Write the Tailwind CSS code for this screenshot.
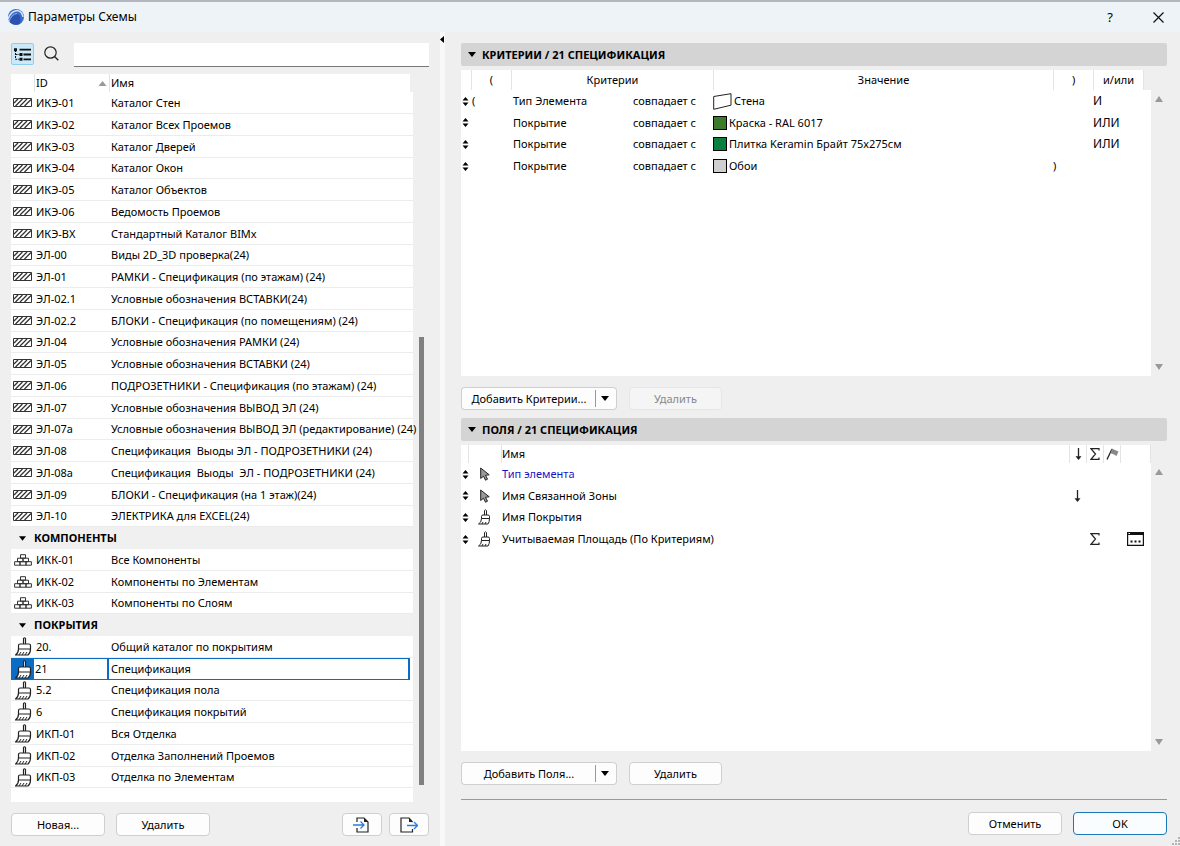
<!DOCTYPE html>
<html lang="ru">

<head>
    <meta charset="UTF-8">
    <meta name="viewport" content="width=device-width, initial-scale=1.0">
    <title>Параметры Схемы</title>
    <script src="https://cdn.jsdelivr.net/npm/@tailwindcss/browser@4"></script>
</head>

<body class="bg-[#efefef] font-['Noto_Sans','Open_Sans',sans-serif] text-[11px] leading-4 text-black">
    <!-- icons -->
    <svg class="hidden">
        <symbol id="wall" viewBox="0 0 19 9">
            <path d="M.5.5h18v8H.5z" fill="#fff" stroke="#333" />
            <path d="M1 5l4-4M2.500 8l7-7M7 8l7-7M11.500 8l6.500-6.500" stroke="#333" stroke-width="1.300" />
        </symbol>
        <symbol id="bricks" viewBox="0 0 18 12">
            <path d="M6.500.7h5v3.500h-5zM3.500 4.200h5.500v3.500H3.500zM9 4.200h5.500v3.500H9zM.6 7.700H6v3.500H.6zM6 7.700h6v3.500H6zM12 7.700h5.400v3.500H12z" fill="none" stroke="#333" />
        </symbol>
        <symbol id="brush" viewBox="0 0 17 19">
            <path d="M8.500 7V1.500q1-1.500 2 0V7M3.500 12V8.500Q3.500 7 5 7h9q1.500 0 1.500 1.500V12zM3.500 12q0 4-3 6h12.500q2.500-2 2.500-6" fill="#fff" stroke="#222" stroke-width="1.200" />
            <path d="M4 18l2-3M7 18l2-3M10 18l2-3" stroke="#222" />
        </symbol>
        <symbol id="brush-small" viewBox="0 0 13 16">
            <path d="M6.500 6V1.500q1-1.500 2 0V6M3.500 9.500V7.500Q3.500 6 5 6h5q1.500 0 1.500 1.500v2zM3.500 9.500q0 4-3 5.500H10q1.500-2 1.500-5.500M4 15l1-2M7 15l1-2" fill="none" stroke="#222" />
        </symbol>
        <symbol id="cursor" viewBox="0 0 10 14">
            <path d="M.7 1v10.500l2.800-2.300 2 4 2-1-2-3.900 3.700-.5z" fill="#999" stroke="#222" />
        </symbol>
        <symbol id="drag" viewBox="0 0 7 9">
            <path d="M3.500 0L6.500 3.500h-6zM3.500 9l3-3.500h-6z" />
        </symbol>
        <symbol id="down" viewBox="0 0 8 5">
            <path d="M0 0h8L4 5z" />
        </symbol>
        <symbol id="arrow" viewBox="0 0 7 12">
            <path d="M3.500 0v9.500" fill="none" stroke="#222" stroke-width="1.300" />
            <path d="M.5 8.200h6L3.500 12z" fill="#222" />
        </symbol>
        <symbol id="sigma" viewBox="0 0 10 12">
            <path d="M9 2.500V.7H1L5.500 6 1 11.300h8V9.500" fill="none" stroke="#222" stroke-width="1.200" />
        </symbol>
    </svg>

    <div class="flex h-screen flex-col border-t-2 border-[#b4b7bd]">
        <header class="flex h-[30px] shrink-0 items-center bg-[#eef3f8] pr-[16px] pl-[8px]">
            <svg class="size-[16px]" viewBox="0 0 16 16">
                <circle cx="8" cy="8" r="8" fill="#3d6cc8" />
                <path d="M0 10Q3 2 9 1.500q5 .5 6 6.500" fill="none" stroke="#d5e4f8" stroke-width="1.500" />
                <path d="M1.500 13Q4 5 9 5q3.500 1 3.500 6l-1 4q-6 2-10-2" fill="#2c52b0" />
                <path d="M1 12.500Q3.500 5 9 4.500" fill="none" stroke="#8fb4ec" />
            </svg>
            <h1 class="ml-[4px] grow text-[12px]">Параметры Схемы</h1>
            <button class="mr-[40px] text-[13px]" aria-label="Справка">?</button>
            <button aria-label="Закрыть">
                <svg class="size-[11px]" viewBox="0 0 11 11"><path d="M.5.5l10 10M10.500.5l-10 10" stroke="#111" stroke-width="1.200" /></svg>
            </button>
        </header>

        <main class="flex min-h-0 grow">
            <!-- scheme list -->
            <section class="flex w-[440px] shrink-0 flex-col px-[11px] pt-[11px] pb-[10px]">
                <div class="flex h-[24px] shrink-0 items-start">
                    <button class="flex h-[22px] w-[23px] items-center justify-center rounded-xs border border-[#8ccdf0] bg-[#cbe9f8]" aria-label="Дерево">
                        <svg class="h-[13px] w-[17px]" viewBox="0 0 17 13">
                            <path d="M5.500 1.700H17M9.500 6.500H17M9.500 11.300H17" stroke="#111" stroke-width="1.800" />
                            <path d="M1.500 2v9.300h4M1.500 6.500h4" fill="none" stroke="#111" stroke-dasharray="2 1" />
                            <path d="M0 .2h3v3H0zM5.500 5h3v3h-3zM5.500 9.800h3v3h-3z" fill="#111" />
                        </svg>
                    </button>
                    <button class="ml-[10px] pt-[3px]" aria-label="Поиск">
                        <svg class="size-[15px]" viewBox="0 0 15 15"><circle cx="6.500" cy="6.500" r="5.700" fill="none" stroke="#222" stroke-width="1.200" /><path d="M10.500 10.500L14.300 14.300" stroke="#222" stroke-width="1.300" /></svg>
                    </button>
                    <input type="text" aria-label="Поиск схемы" class="ml-[15px] h-[24px] min-w-0 grow border-b border-[#777] bg-white px-1 outline-none">
                </div>

                <div class="mt-[7px] flex min-h-0 grow">
                    <div class="w-[402px] overflow-x-visible overflow-y-clip bg-white">
                        <table class="w-full table-fixed border-separate border-spacing-0 text-left">
                            <colgroup>
                                <col class="w-[23px]">
                                <col class="w-[75px]">
                                <col>
                                <col class="w-[3px]">
                            </colgroup>
                            <thead>
                                <tr class="h-[18px]">
                                    <th class="p-0"></th>
                                    <th class="border-l border-[#e4e4e4] p-0 font-normal">
                                        <div class="flex items-center justify-between pr-[2px] pl-[1px]">ID
                                            <svg class="h-[5px] w-[9px] rotate-180 fill-[#999]"><use href="#down" /></svg>
                                        </div>
                                    </th>
                                    <th class="border-l border-[#e4e4e4] p-0 pl-[1px] font-normal">Имя</th>
                                    <th class="bg-[#efefef] p-0"></th>
                                </tr>
                            </thead>
                            <tbody id="schemes"></tbody>
                        </table>
                    </div>
                    <div class="ml-[6px] flex w-[5px] flex-col justify-end pb-[17px]">
                        <div class="h-[63%] bg-[#808080]"></div>
                    </div>
                </div>

                <div class="mt-[11px] flex h-[23px] shrink-0">
                    <button class="w-[94px] rounded-sm border border-[#cfcfcf] bg-[#fdfdfd]">Новая...</button>
                    <button class="ml-[11px] w-[94px] rounded-sm border border-[#cfcfcf] bg-[#fdfdfd]">Удалить</button>
                    <button class="ml-auto flex w-[40px] items-center justify-center rounded-sm border border-[#cfcfcf] bg-[#fdfdfd]" aria-label="Импорт">
                        <svg class="h-[16px] w-[18px]" viewBox="0 0 18 16" fill="none"><path d="M4 5V1h7L15 5v10H4v-4" stroke="#222" stroke-width="1.200" /><path d="M11 1v4h4z" fill="#222" /><path d="M0 8h10.500M7.500 4.500L11 8l-3.500 3.500" stroke="#2b7be0" stroke-width="1.300" /></svg>
                    </button>
                    <button class="ml-[7px] flex w-[40px] items-center justify-center rounded-sm border border-[#cfcfcf] bg-[#fdfdfd]" aria-label="Экспорт">
                        <svg class="h-[16px] w-[18px]" viewBox="0 0 18 16" fill="none"><path d="M12.500 12v3H1V1h8l3.500 4" stroke="#222" stroke-width="1.200" /><path d="M9 1v4h3.500z" fill="#222" /><path d="M7 8.500h10M14 5l3.500 3.500L14 12" stroke="#2b7be0" stroke-width="1.300" /></svg>
                    </button>
                </div>
            </section>

            <div class="w-[5px] shrink-0 bg-[#f8f8f8] pt-[4px]">
                <svg class="h-[7px] w-[4px]" viewBox="0 0 4 7"><path d="M4 0v7L0 3.500z" /></svg>
            </div>

            <section class="flex min-w-0 grow flex-col pt-[11px] pr-[13px] pb-[11px] pl-[16px]">
                <!-- criteria -->
                <h2 class="flex h-[23px] shrink-0 items-center rounded-xs bg-[#d4d4d4] pl-[7px] text-[11px] font-bold">
                    <svg class="mr-[6px] h-[5px] w-[8px]"><use href="#down" /></svg>КРИТЕРИИ / 21 СПЕЦИФИКАЦИЯ
                </h2>
                <div class="mt-[4px] flex min-h-0 flex-1">
                    <div class="grow overflow-hidden bg-white">
                        <table class="w-full table-fixed border-separate border-spacing-0">
                            <colgroup>
                                <col class="w-[10px]">
                                <col class="w-[40px]">
                                <col class="w-[122px]">
                                <col class="w-[80px]">
                                <col>
                                <col class="w-[40px]">
                                <col class="w-[50px]">
                                <col class="w-[8px]">
                            </colgroup>
                            <thead>
                                <tr class="h-[20px]">
                                    <th></th>
                                    <th class="border-l border-[#e4e4e4] font-normal">(</th>
                                    <th colspan="2" class="border-l border-[#e4e4e4] font-normal">Критерии</th>
                                    <th class="border-l border-[#e4e4e4] font-normal">Значение</th>
                                    <th class="border-l border-[#e4e4e4] font-normal">)</th>
                                    <th class="border-l border-[#e4e4e4] font-normal">и/или</th>
                                    <th class="border-l border-[#e4e4e4] bg-[#efefef]"></th>
                                </tr>
                            </thead>
                            <tbody>
                                <tr class="h-[22px]">
                                    <td class="pl-px"><svg class="h-[9px] w-[7px]"><use href="#drag" /></svg></td>
                                    <td class="pl-px">(</td>
                                    <td class="pl-[2px]">Тип Элемента</td>
                                    <td>совпадает с</td>
                                    <td>
                                        <div class="flex items-center gap-[2px]">
                                            <svg class="h-[17px] w-[19px]" viewBox="0 0 19 17"><path d="M.7 3.500L18 .7v11.500L.7 16.300z" fill="#fff" stroke="#222" /></svg>Стена
                                        </div>
                                    </td>
                                    <td></td>
                                    <td class="text-[12px]">И</td>
                                    <td></td>
                                </tr>
                                <tr class="h-[21px]">
                                    <td class="pl-px"><svg class="h-[9px] w-[7px]"><use href="#drag" /></svg></td>
                                    <td></td>
                                    <td class="pl-[2px]">Покрытие</td>
                                    <td>совпадает с</td>
                                    <td>
                                        <div class="flex items-center gap-[2px]"><span class="size-[14px] border border-black bg-[#3c7a2c]"></span>Краска - RAL 6017</div>
                                    </td>
                                    <td></td>
                                    <td class="text-[12px]">ИЛИ</td>
                                    <td></td>
                                </tr>
                                <tr class="h-[22px]">
                                    <td class="pl-px"><svg class="h-[9px] w-[7px]"><use href="#drag" /></svg></td>
                                    <td></td>
                                    <td class="pl-[2px]">Покрытие</td>
                                    <td>совпадает с</td>
                                    <td>
                                        <div class="flex items-center gap-[2px]"><span class="size-[14px] border border-black bg-[#0a8040]"></span>Плитка Keramin Брайт 75х275см</div>
                                    </td>
                                    <td></td>
                                    <td class="text-[12px]">ИЛИ</td>
                                    <td></td>
                                </tr>
                                <tr class="h-[22px]">
                                    <td class="pl-px"><svg class="h-[9px] w-[7px]"><use href="#drag" /></svg></td>
                                    <td></td>
                                    <td class="pl-[2px]">Покрытие</td>
                                    <td>совпадает с</td>
                                    <td>
                                        <div class="flex items-center gap-[2px]"><span class="size-[14px] border border-black bg-[#cfcfcf]"></span>Обои</div>
                                    </td>
                                    <td>)</td>
                                    <td></td>
                                    <td></td>
                                </tr>
                            </tbody>
                        </table>
                    </div>
                    <div class="flex w-[16px] shrink-0 flex-col items-center justify-between pt-[26px] pb-[6px]">
                        <svg class="h-[6px] w-[8px] rotate-180 fill-[#999]" viewBox="0 0 8 6"><path d="M0 0h8L4 6z" /></svg>
                        <svg class="h-[6px] w-[8px] fill-[#999]" viewBox="0 0 8 6"><path d="M0 0h8L4 6z" /></svg>
                    </div>
                </div>
                <div class="mt-[11px] flex h-[23px] shrink-0">
                    <button class="w-[135px] rounded-l-sm border border-r-0 border-[#cfcfcf] bg-[#fdfdfd]">Добавить Критерии...</button>
                    <button class="flex w-[21px] items-center rounded-r-sm border border-l-0 border-[#cfcfcf] bg-[#fdfdfd]" aria-label="Варианты критериев">
                        <span class="mr-[5px] -ml-px h-[17px] w-px bg-[#999]"></span><svg class="h-[5px] w-[8px]"><use href="#down" /></svg>
                    </button>
                    <button disabled class="ml-[12px] w-[93px] rounded-sm border border-[#e6e6e6] bg-[#f5f5f5] text-[#888]">Удалить</button>
                </div>

                <!-- fields -->
                <h2 class="mt-[8px] flex h-[23px] shrink-0 items-center rounded-xs bg-[#d4d4d4] pl-[7px] text-[11px] font-bold">
                    <svg class="mr-[6px] h-[5px] w-[8px]"><use href="#down" /></svg>ПОЛЯ / 21 СПЕЦИФИКАЦИЯ
                </h2>
                <div class="mt-[4px] flex min-h-0 flex-1">
                    <div class="grow overflow-hidden bg-white">
                        <table class="w-full table-fixed border-separate border-spacing-0 text-left">
                            <colgroup>
                                <col class="w-[7px]">
                                <col class="w-[33px]">
                                <col>
                                <col class="w-[17px]">
                                <col class="w-[17px]">
                                <col class="w-[17px]">
                                <col class="w-[31px]">
                            </colgroup>
                            <thead>
                                <tr class="h-[18px]">
                                    <th class="p-0"></th>
                                    <th class="border-l border-[#e4e4e4] p-0"></th>
                                    <th class="border-l border-[#e4e4e4] p-0 font-normal">Имя</th>
                                    <th class="border-l border-[#e4e4e4] p-0"><svg class="mx-auto h-[12px] w-[7px]"><use href="#arrow" /></svg></th>
                                    <th class="border-l border-[#e4e4e4] p-0"><svg class="mx-auto h-[12px] w-[10px]"><use href="#sigma" /></svg></th>
                                    <th class="border-l border-[#e4e4e4] p-0">
                                        <svg class="mx-auto h-[12px] w-[13px]" viewBox="0 0 13 12"><path d="M1 11.500L6 1" stroke="#222" stroke-width="1.300" /><path d="M6 .5l3 1.500 3.500 1.500L10.500 8 8 6.500 4.500 5z" fill="#888" /></svg>
                                    </th>
                                    <th class="border-x border-[#e4e4e4] p-0"></th>
                                </tr>
                            </thead>
                            <tbody>
                                <tr class="h-[22px]">
                                    <td class="p-0 pl-px"><svg class="h-[9px] w-[7px]"><use href="#drag" /></svg></td>
                                    <td class="p-0 pl-[12px]"><svg class="h-[14px] w-[10px]"><use href="#cursor" /></svg></td>
                                    <td class="p-0 pl-px text-[#1a14c4]">Тип элемента</td>
                                    <td></td>
                                    <td></td>
                                    <td></td>
                                    <td></td>
                                </tr>
                                <tr class="h-[21px]">
                                    <td class="p-0 pl-px"><svg class="h-[9px] w-[7px]"><use href="#drag" /></svg></td>
                                    <td class="p-0 pl-[12px]"><svg class="h-[14px] w-[10px]"><use href="#cursor" /></svg></td>
                                    <td class="p-0 pl-px">Имя Связанной Зоны</td>
                                    <td class="p-0"><svg class="mx-auto h-[12px] w-[7px]"><use href="#arrow" /></svg></td>
                                    <td></td>
                                    <td></td>
                                    <td></td>
                                </tr>
                                <tr class="h-[22px]">
                                    <td class="p-0 pl-px"><svg class="h-[9px] w-[7px]"><use href="#drag" /></svg></td>
                                    <td class="p-0 pl-[10px]"><svg class="h-[16px] w-[13px]"><use href="#brush-small" /></svg></td>
                                    <td class="p-0 pl-px">Имя Покрытия</td>
                                    <td></td>
                                    <td></td>
                                    <td></td>
                                    <td></td>
                                </tr>
                                <tr class="h-[22px]">
                                    <td class="p-0 pl-px"><svg class="h-[9px] w-[7px]"><use href="#drag" /></svg></td>
                                    <td class="p-0 pl-[10px]"><svg class="h-[16px] w-[13px]"><use href="#brush-small" /></svg></td>
                                    <td class="p-0 pl-px">Учитываемая Площадь (По Критериям)</td>
                                    <td></td>
                                    <td class="p-0"><svg class="mx-auto h-[12px] w-[10px]"><use href="#sigma" /></svg></td>
                                    <td></td>
                                    <td class="p-0 pl-[7px]">
                                        <svg class="h-[14px] w-[17px]" viewBox="0 0 17 14"><path d="M.6.6h15.800v12.800H.6z" fill="#fff" stroke="#111" stroke-width="1.200" /><path d="M0 0h17v3H0z" fill="#111" /><path d="M1.500 1h1.500v1H1.500z" fill="#fff" /><path d="M3.500 8.500h2v2h-2zM7.500 8.500h2v2h-2zM11.500 8.500h2v2h-2z" fill="#111" /></svg>
                                    </td>
                                </tr>
                            </tbody>
                        </table>
                    </div>
                    <div class="flex w-[16px] shrink-0 flex-col items-center justify-between pt-[24px] pb-[6px]">
                        <svg class="h-[6px] w-[8px] rotate-180 fill-[#999]" viewBox="0 0 8 6"><path d="M0 0h8L4 6z" /></svg>
                        <svg class="h-[6px] w-[8px] fill-[#999]" viewBox="0 0 8 6"><path d="M0 0h8L4 6z" /></svg>
                    </div>
                </div>
                <div class="mt-[11px] flex h-[23px] shrink-0">
                    <button class="w-[135px] rounded-l-sm border border-r-0 border-[#cfcfcf] bg-[#fdfdfd]">Добавить Поля...</button>
                    <button class="flex w-[21px] items-center rounded-r-sm border border-l-0 border-[#cfcfcf] bg-[#fdfdfd]" aria-label="Варианты полей">
                        <span class="mr-[5px] -ml-px h-[17px] w-px bg-[#999]"></span><svg class="h-[5px] w-[8px]"><use href="#down" /></svg>
                    </button>
                    <button class="ml-[12px] w-[93px] rounded-sm border border-[#cfcfcf] bg-[#fdfdfd]">Удалить</button>
                </div>

                <footer class="mt-[14px] flex shrink-0 justify-end gap-[11px] border-t border-[#999] pt-[12px]">
                    <button class="h-[23px] w-[94px] rounded-sm border border-[#cfcfcf] bg-[#fdfdfd]">Отменить</button>
                    <button class="h-[23px] w-[94px] rounded-sm border border-[#1a78b8] bg-[#fafdff]">OK</button>
                </footer>
            </section>
        </main>
    </div>

    <svg class="absolute right-0 bottom-0 size-[9px]" viewBox="0 0 9 9"><path d="M7 0h2v2H7zM4 3h2v2H4zM7 3h2v2H7zM1 6h2v2H1zM4 6h2v2H4zM7 6h2v2H7z" fill="#b5b5b5" /></svg>

    <script>
        // [icon, id, name]; a row with one item is a group title
        const schemes = [
            ['wall', 'ИКЭ-01', 'Каталог Стен'],
            ['wall', 'ИКЭ-02', 'Каталог Всех Проемов'],
            ['wall', 'ИКЭ-03', 'Каталог Дверей'],
            ['wall', 'ИКЭ-04', 'Каталог Окон'],
            ['wall', 'ИКЭ-05', 'Каталог Объектов'],
            ['wall', 'ИКЭ-06', 'Ведомость Проемов'],
            ['wall', 'ИКЭ-ВХ', 'Стандартный Каталог BIMx'],
            ['wall', 'ЭЛ-00', 'Виды 2D_3D проверка(24)'],
            ['wall', 'ЭЛ-01', 'РАМКИ - Спецификация (по этажам) (24)'],
            ['wall', 'ЭЛ-02.1', 'Условные обозначения ВСТАВКИ(24)'],
            ['wall', 'ЭЛ-02.2', 'БЛОКИ - Спецификация (по помещениям) (24)'],
            ['wall', 'ЭЛ-04', 'Условные обозначения РАМКИ (24)'],
            ['wall', 'ЭЛ-05', 'Условные обозначения ВСТАВКИ (24)'],
            ['wall', 'ЭЛ-06', 'ПОДРОЗЕТНИКИ - Спецификация (по этажам) (24)'],
            ['wall', 'ЭЛ-07', 'Условные обозначения ВЫВОД ЭЛ (24)'],
            ['wall', 'ЭЛ-07а', 'Условные обозначения ВЫВОД ЭЛ (редактирование) (24)'],
            ['wall', 'ЭЛ-08', 'Спецификация  Выоды ЭЛ - ПОДРОЗЕТНИКИ (24)'],
            ['wall', 'ЭЛ-08а', 'Спецификация  Выоды  ЭЛ - ПОДРОЗЕТНИКИ (24)'],
            ['wall', 'ЭЛ-09', 'БЛОКИ - Спецификация (на 1 этаж)(24)'],
            ['wall', 'ЭЛ-10', 'ЭЛЕКТРИКА для EXCEL(24)'],
            ['КОМПОНЕНТЫ'],
            ['bricks', 'ИКК-01', 'Все Компоненты'],
            ['bricks', 'ИКК-02', 'Компоненты по Элементам'],
            ['bricks', 'ИКК-03', 'Компоненты по Слоям'],
            ['ПОКРЫТИЯ'],
            ['brush', '20.', 'Общий каталог по покрытиям'],
            ['brush', '21', 'Спецификация'],
            ['brush', '5.2', 'Спецификация пола'],
            ['brush', '6', 'Спецификация покрытий'],
            ['brush', 'ИКП-01', 'Вся Отделка'],
            ['brush', 'ИКП-02', 'Отделка Заполнений Проемов'],
            ['brush', 'ИКП-03', 'Отделка по Элементам'],
        ];
        const selected = '21';

        const icons = {
            wall: '<svg class="ml-[2px] h-[9px] w-[19px]"><use href="#wall" /></svg>',
            bricks: '<svg class="ml-[3px] h-[12px] w-[18px]"><use href="#bricks" /></svg>',
            brush: '<svg class="ml-[4px] h-[19px] w-[17px]"><use href="#brush" /></svg>',
        };

        document.getElementById('schemes').innerHTML = schemes.map(([icon, id, name]) => {
            if (!id) {
                return `<tr class="h-[22px] nth-[4n]:h-[21px]">
                    <th colspan="4" class="bg-[#f0f0f0] p-0 text-[11px] font-bold">
                        <div class="flex items-center gap-[8px] pl-[8px]"><svg class="h-[5px] w-[7px]"><use href="#down" /></svg>${icon}</div>
                    </th>
                </tr>`;
            }
            if (id === selected) {
                return `<tr class="h-[22px] nth-[4n]:h-[21px]">
                    <td class="border-y border-[#0a6cc4] bg-[#0a6cc4] p-0">${icons[icon]}</td>
                    <td class="border-y border-r-2 border-[#0a6cc4] p-0 pl-px">${id}</td>
                    <td class="border-y border-r-2 border-[#0a6cc4] p-0 pl-[2px]">${name}</td>
                    <td></td>
                </tr>`;
            }
            return `<tr class="h-[22px] nth-[4n]:h-[21px]">
                <td class="border-b border-[#ececec] p-0">${icons[icon]}</td>
                <td class="border-b border-[#ececec] p-0 pl-[2px]">${id}</td>
                <td colspan="2" class="border-b border-[#ececec] p-0 pl-[2px] whitespace-pre">${name}</td>
            </tr>`;
        }).join('');
    </script>
</body>

</html>
